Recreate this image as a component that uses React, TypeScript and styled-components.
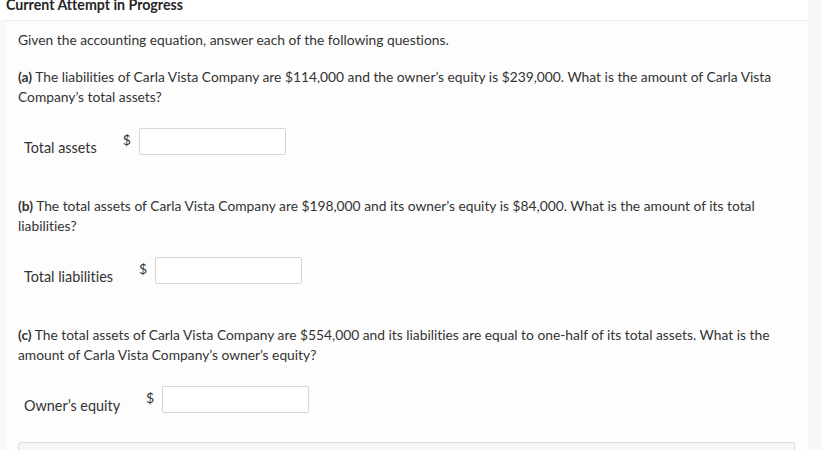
import styled, { createGlobalStyle } from "styled-components";

const GlobalStyle = createGlobalStyle`
  html, body {
    margin: 0;
    padding: 0;
    background: #ffffff;
  }
  body {
    font-family: Lato, "Open Sans", "Liberation Sans", sans-serif;
    font-variant-ligatures: none;
    color: #333333;
    overflow: hidden;
  }
`;

const Page = styled.div`
  display: flex;
  width: 822px;
  height: 450px;
  overflow: hidden;
`;

const Main = styled.div`
  width: 808px;
  display: flex;
  flex-direction: column;
  background: #ffffff;
`;

const Side = styled.div`
  flex: 1;
  background: #f8f8f8;
`;

const Title = styled.h2`
  flex-shrink: 0;
  margin: 0;
  padding-left: 6px;
  height: 20px;
  font-size: 14.2px;
  line-height: 10px;
  font-weight: 700;
  color: #262626;
`;

const Body = styled.div`
  display: flex;
  flex: 1;
  flex-shrink: 0;
`;

const Strip = styled.div`
  width: 5px;
  background: #f8f8f8;
`;

const Panel = styled.div`
  flex: 1;
  background: #fdfdfd;
  border-top: 1px solid #ececec;
  padding: 9px 13px 0 13px;
`;

const Text = styled.p`
  margin: 0;
  font-size: 13.8px;
  line-height: 20px;
  color: #333333;
`;

const Intro = styled(Text)`
  margin-bottom: 17px;
`;

const Part = styled.section<{ $last?: boolean }>`
  margin-bottom: ${(p) => (p.$last ? "26px" : "38px")};
`;

const Tag = styled.b`
  font-weight: 700;
`;

const Row = styled.div`
  display: flex;
  align-items: flex-start;
  margin-top: 21px;
  padding-left: 6px;
`;

const Label = styled.span`
  margin-top: 10px;
  font-size: 14.4px;
  line-height: 20px;
  color: #333333;
`;

const Dollar = styled.span`
  margin: 2px 8px 0 26px;
  font-size: 14px;
  line-height: 20px;
  color: #333333;
`;

const Input = styled.input`
  box-sizing: border-box;
  width: 147px;
  height: 27px;
  margin: 0;
  border: 1px solid #d6d6d6;
  border-radius: 2px;
  background: #ffffff;
  padding: 0 6px;
  font-family: inherit;
  font-size: 14px;
  outline: none;
`;

const Footer = styled.div`
  height: 20px;
  border: 1px solid #dcdcdc;
  border-bottom: none;
  border-radius: 3px 3px 0 0;
  background: #f7f7f7;
`;

type Question = {
  tag: string;
  text: string;
  label: string;
};

const questions: Question[] = [
  {
    tag: "(a)",
    text: "The liabilities of Carla Vista Company are $114,000 and the owner\u2019s equity is $239,000. What is the amount of Carla Vista Company\u2019s total assets?",
    label: "Total assets",
  },
  {
    tag: "(b)",
    text: "The total assets of Carla Vista Company are $198,000 and its owner\u2019s equity is $84,000. What is the amount of its total liabilities?",
    label: "Total liabilities",
  },
  {
    tag: "(c)",
    text: "The total assets of Carla Vista Company are $554,000 and its liabilities are equal to one-half of its total assets. What is the amount of Carla Vista Company\u2019s owner\u2019s equity?",
    label: "Owner\u2019s equity",
  },
];

const App = () => {
  return (
    <>
      <GlobalStyle />
      <Page>
        <Main>
          <Title>Current Attempt in Progress</Title>
          <Body>
            <Strip />
            <Panel>
              <Intro>Given the accounting equation, answer each of the following questions.</Intro>
              {questions.map((q, i) => (
                <Part key={q.tag} $last={i === questions.length - 1}>
                  <Text>
                    <Tag>{q.tag}</Tag> {q.text}
                  </Text>
                  <Row>
                    <Label>{q.label}</Label>
                    <Dollar>$</Dollar>
                    <Input type="text" aria-label={q.label} />
                  </Row>
                </Part>
              ))}
              <Footer />
            </Panel>
          </Body>
        </Main>
        <Side />
      </Page>
    </>
  );
};

export default App;
